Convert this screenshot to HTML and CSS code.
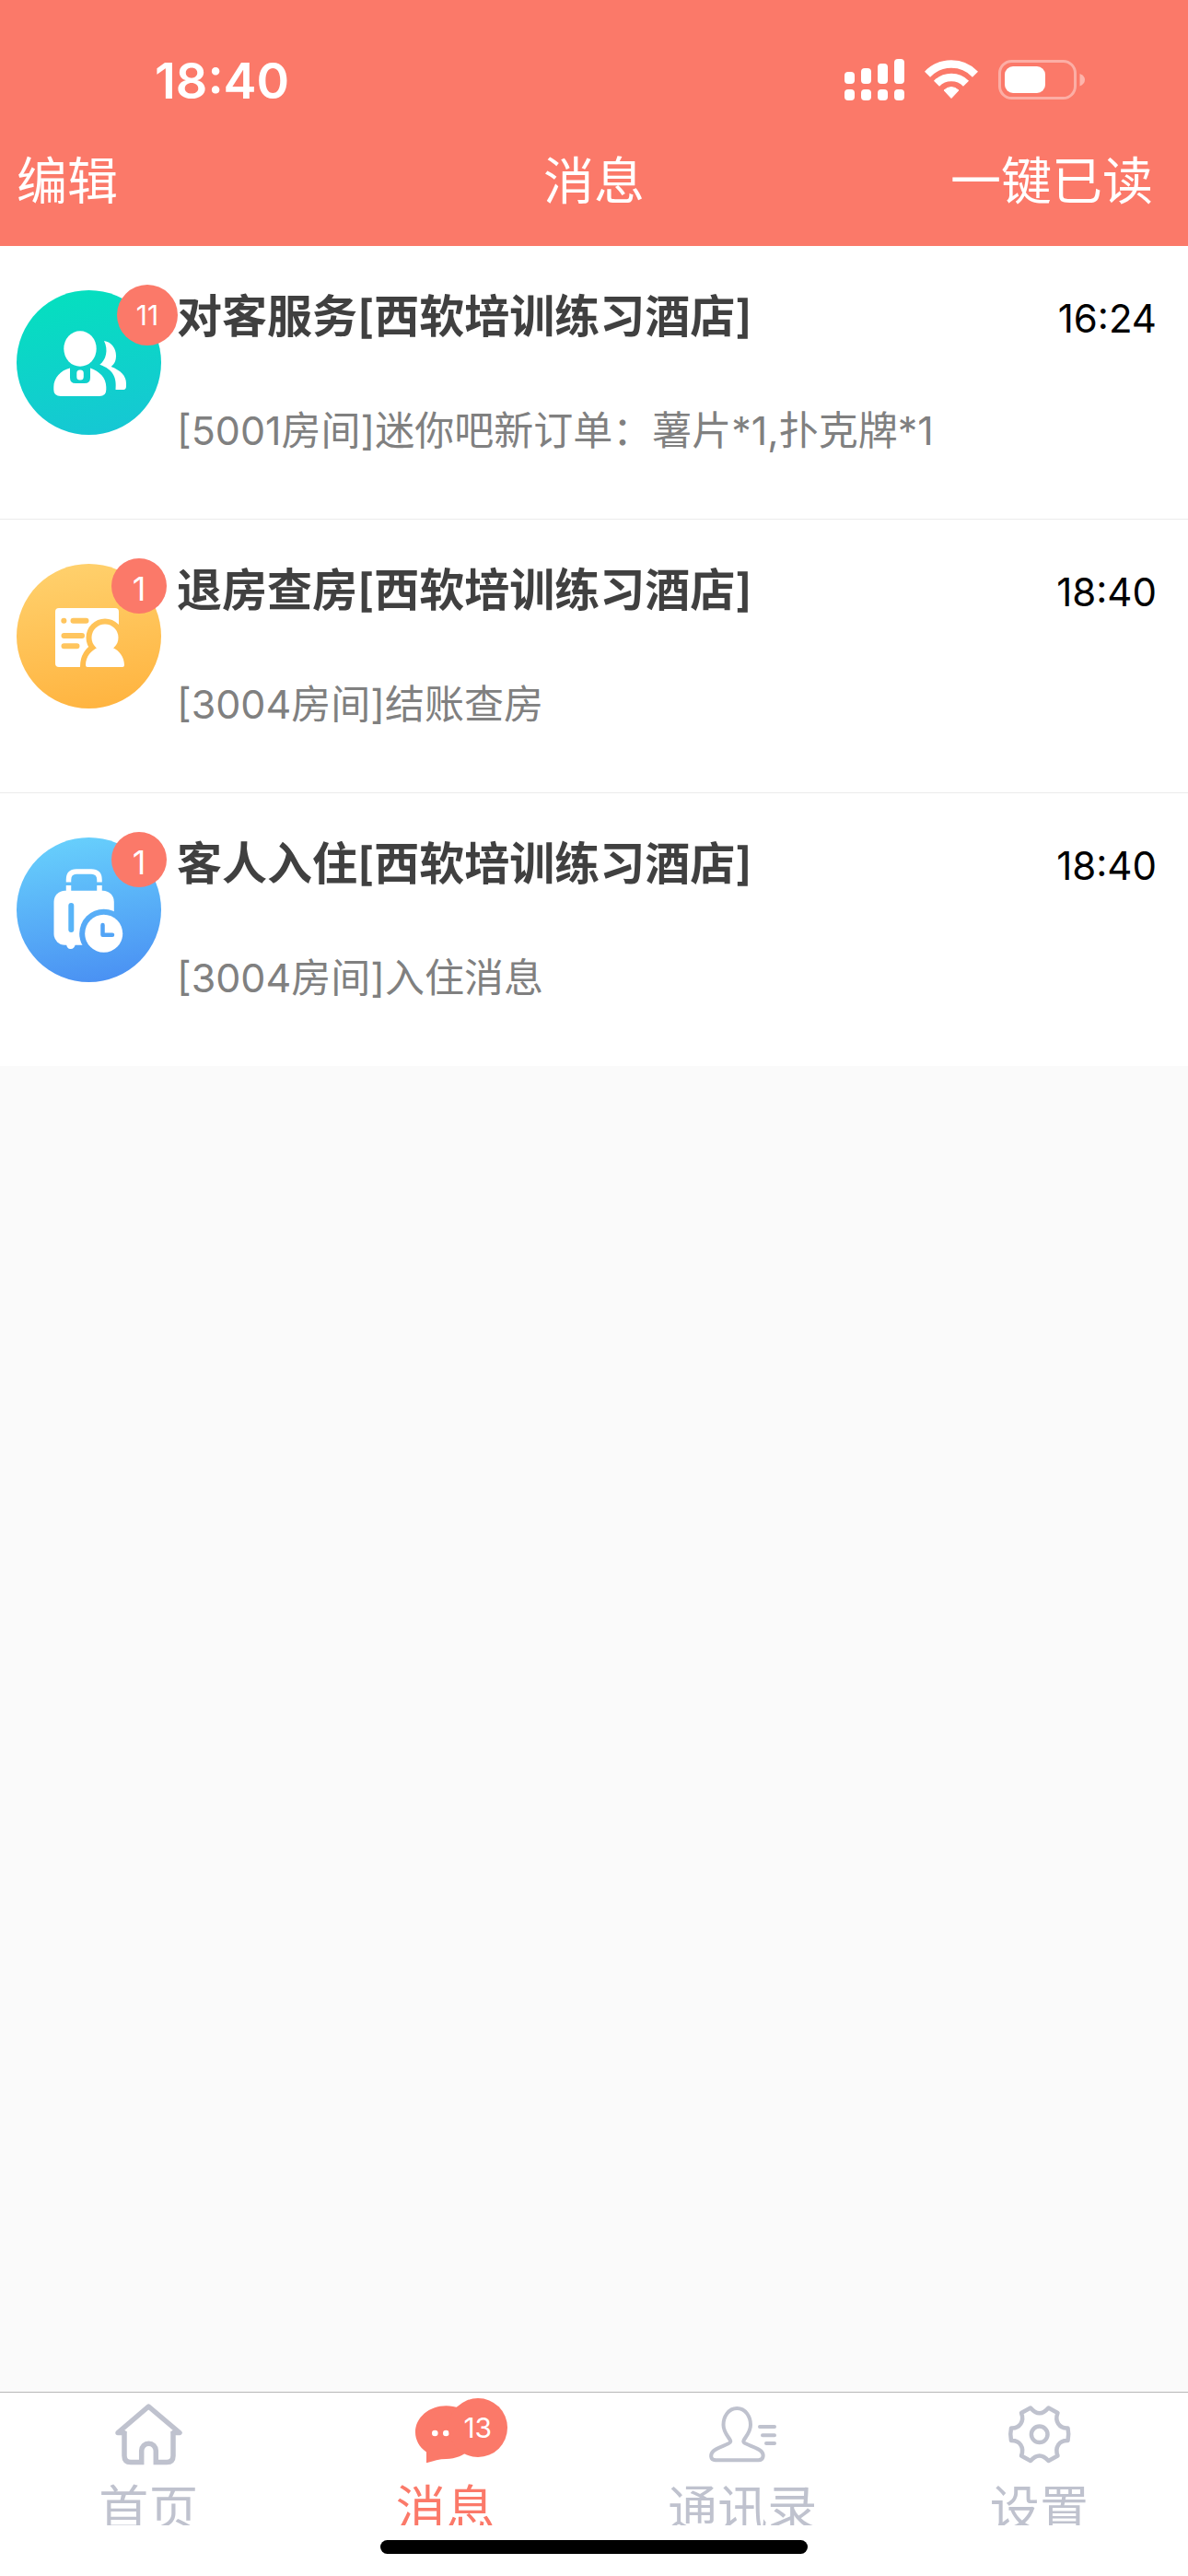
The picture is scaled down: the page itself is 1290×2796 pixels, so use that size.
FILE: index.html
```html
<!DOCTYPE html>
<html lang="zh-CN">
<head>
<meta charset="UTF-8">
<meta name="viewport" content="width=device-width,initial-scale=1">
<title>消息</title>
<link rel="stylesheet" href="styles.css">
</head>
<body>
<header class="header">
  <div class="status">
    <span class="clock">18:40</span>
    <div class="status-icons">
      <svg width="65" height="45" viewBox="0 0 65 45" fill="#fff">
        <rect x="0" y="14" width="11" height="13" rx="4"/><rect x="18" y="10" width="11" height="17" rx="4"/>
        <rect x="36" y="5" width="11" height="22" rx="4"/><rect x="54" y="0" width="11" height="27" rx="4"/>
        <rect x="0" y="33" width="11" height="12" rx="4"/><rect x="18" y="33" width="11" height="12" rx="4"/>
        <rect x="36" y="33" width="11" height="12" rx="4"/><rect x="54" y="33" width="11" height="12" rx="4"/>
      </svg>
      <svg width="58" height="43" viewBox="0 0 58 43" fill="none" stroke="#fff" stroke-width="8.5">
        <path d="M3 15.7A36 36 0 0 1 55 15.7"/>
        <path d="M13 25.7A22.4 22.4 0 0 1 45 25.7"/>
        <path d="M21 33Q29 26 37 33L29 41.5Z" fill="#fff" stroke-width="1" stroke-linejoin="round"/>
      </svg>
      <svg width="94" height="43" viewBox="0 0 94 43">
        <rect x="1.5" y="1.5" width="82" height="40" rx="13" fill="none" stroke="#fff" stroke-width="3" opacity=".4"/>
        <rect x="7" y="7" width="44" height="29" rx="9" fill="#fff"/>
        <path d="M88.5 15Q94 17 94 21.5T88.5 28.5Z" fill="#fff" opacity=".45"/>
      </svg>
    </div>
  </div>
  <div class="nav">
    <button class="nav-btn" type="button">编辑</button>
    <h1>消息</h1>
    <button class="nav-btn nav-right" type="button">一键已读</button>
  </div>
</header>

<main class="content">
  <ul class="messages">
    <li class="message">
      <div class="avatar">
        <svg viewBox="0 0 157 157">
          <defs><linearGradient id="teal" x1=".4" y1="0" x2=".6" y2="1"><stop offset="0" stop-color="#05dfbf"/><stop offset="1" stop-color="#16c7d4"/></linearGradient></defs>
          <circle cx="78.5" cy="78.5" r="78.5" fill="url(#teal)"/>
          <g fill="#fff">
            <ellipse cx="69" cy="63.5" rx="17.7" ry="19.3"/>
            <path d="M58 84.500V95Q58 101 64 101H74Q80 101 80 95V84.500C90 88 97.300 95 97.300 105V108Q97.300 115 90 115H48Q40.300 115 40.300 108V105C40.300 95 48 87 58 84.500Z"/>
            <rect x="65.300" y="86.500" width="7.500" height="11" rx="3.500"/>
            <path d="M95 55C103 56 108 63 108 71C108 77 106 80 102.700 83C113 87 119 93 119 101V104Q119 108 116 108H107.500C109 95 105 86 90.300 80.700C97 76 100 65 95 55Z"/>
          </g>
        </svg>
        <span class="badge badge-wide">11</span>
      </div>
      <div class="message-body">
        <div class="message-top"><h2>对客服务[西软培训练习酒店]</h2><time>16:24</time></div>
        <p>[5001房间]迷你吧新订单：薯片*1,扑克牌*1</p>
      </div>
    </li>
    <li class="message">
      <div class="avatar">
        <svg viewBox="0 0 157 157">
          <defs><linearGradient id="amber" gradientUnits="userSpaceOnUse" x1="65" y1="0" x2="92" y2="157"><stop offset="0" stop-color="#ffd06c"/><stop offset="1" stop-color="#ffb440"/></linearGradient></defs>
          <circle cx="78.5" cy="78.5" r="78.5" fill="url(#amber)"/>
          <rect x="42" y="48" width="69" height="64" rx="4" fill="#fff"/>
          <g stroke="url(#amber)" stroke-width="12" fill="url(#amber)">
            <circle cx="96" cy="80" r="14.5"/>
            <path d="M75 111.500C75 100 82 94 87 91.300H105C111 94 117 101 117 111.500Z"/>
          </g>
          <g fill="#fff">
            <circle cx="96" cy="80" r="14.5"/>
            <path d="M75 110C75 100 82 94 87 91.300L90 88H102L105 91.300C111 94 117 101 117 110Q117 112 115 112H77Q75 112 75 110Z"/>
          </g>
          <path d="M51.300 61.700h.1M61.500 61.700H75.500M51.500 78H71M51.500 89.300H65.500" fill="none" stroke="#ffc55e" stroke-width="6" stroke-linecap="round"/>
        </svg>
        <span class="badge">1</span>
      </div>
      <div class="message-body">
        <div class="message-top"><h2>退房查房[西软培训练习酒店]</h2><time>18:40</time></div>
        <p>[3004房间]结账查房</p>
      </div>
    </li>
    <li class="message">
      <div class="avatar">
        <svg viewBox="0 0 157 157">
          <defs><linearGradient id="blue" gradientUnits="userSpaceOnUse" x1="65" y1="0" x2="92" y2="157"><stop offset="0" stop-color="#67cffc"/><stop offset="1" stop-color="#4a91f3"/></linearGradient></defs>
          <circle cx="78.5" cy="78.5" r="78.5" fill="url(#blue)"/>
          <path d="M56.500 48.500V46Q56.500 37 65 37H81Q90 37 90 46V48.500M56.500 52V60M90 52V60" fill="none" stroke="#fff" stroke-width="5.500"/>
          <rect x="40.500" y="57.700" width="65.300" height="59" rx="12" fill="#fff"/>
          <path d="M54 115H64Q63 121 58.700 121T54 115Z" fill="#fff"/>
          <path d="M59.300 74V100" stroke="#58b4f8" stroke-width="6" stroke-linecap="round"/>
          <circle cx="94.700" cy="104.300" r="26.500" fill="url(#blue)"/>
          <circle cx="94.700" cy="104.300" r="20.500" fill="#fff"/>
          <path d="M93.500 95V105.700H104" fill="none" stroke="#52a4f6" stroke-width="4.500" stroke-linecap="round" stroke-linejoin="round"/>
        </svg>
        <span class="badge">1</span>
      </div>
      <div class="message-body">
        <div class="message-top"><h2>客人入住[西软培训练习酒店]</h2><time>18:40</time></div>
        <p>[3004房间]入住消息</p>
      </div>
    </li>
  </ul>
</main>

<footer class="footer">
  <nav class="tabs">
    <a class="tab" href="#home">
      <span class="tab-icon">
        <svg viewBox="0 0 80 80" fill="none" stroke="currentColor" stroke-width="5.5" stroke-linejoin="round">
          <path d="M13.500 40.500H7L40.300 12L74 40.500H67.500" stroke-linecap="round"/>
          <path d="M14 39V65.500Q14 72.500 21 72.500H32.700V60A7.800 7.800 0 0 1 48.300 60V72.500H60Q67 72.500 67 65.500V39" stroke-linejoin="miter"/>
        </svg>
      </span>
      <span>首页</span>
    </a>
    <a class="tab active" href="#messages">
      <span class="tab-icon">
        <svg viewBox="0 0 80 80">
          <path d="M40.500 11.300C59 11.300 74 24 74 40S59 69 40.500 69C33 69 27 71 19 73.300V61.500C11 56 7 48 7 40C7 24 22 11.300 40.500 11.300Z" fill="currentColor"/>
          <circle cx="28.300" cy="41" r="3.300" fill="#fff"/><circle cx="40.300" cy="41" r="3.300" fill="#fff"/>
        </svg>
        <span class="badge tab-badge">13</span>
      </span>
      <span>消息</span>
    </a>
    <a class="tab" href="#contacts">
      <span class="tab-icon">
        <svg viewBox="0 0 80 80" fill="none" stroke="currentColor" stroke-width="4" stroke-linecap="round" stroke-linejoin="round">
          <path d="M34.300 14C25 14 19.500 23 19.500 32C19.500 41 27.300 47 27.300 50C27.300 53 13 56 8.500 60.500C5.500 63.500 4.500 70 11 70.300H57.500C64 70 63.500 63.500 60.500 60.500C56 56 41.300 53 41.300 50C41.300 47 49 41 49 32C49 23 43.500 14 34.300 14Z"/>
          <path d="M59 34H75M62 43.300H75M66 52H75"/>
        </svg>
      </span>
      <span>通讯录</span>
    </a>
    <a class="tab" href="#settings">
      <span class="tab-icon">
        <svg viewBox="0 0 80 80" fill="none" stroke="currentColor" stroke-width="4.500" stroke-linejoin="round">
          <path d="M30 13.500Q39.700 25 49.500 13.500L59.500 19C56 28 61 36 70.500 35.500Q72 42 70.500 49C61 48.500 56 56.500 59.500 65.500L49.500 71Q39.700 60 30 71L20 65.500C23.500 56.500 18.500 48.500 9 49Q7.500 42 9 35.500C18.500 36 23.500 28 20 19Z"/>
          <circle cx="39.700" cy="42.300" r="8.800"/>
        </svg>
      </span>
      <span>设置</span>
    </a>
  </nav>
  <div class="home-indicator"></div>
</footer>
</body>
</html>
```
FILE: styles.css
```css
*{box-sizing:border-box;}
body{font-family:Inter,"Noto Sans CJK SC",sans-serif;margin:0;min-height:100vh;display:flex;flex-direction:column;background:#fafafa;color:#000;}
h1,h2,p,ul{margin:0;padding:0;}
svg{display:block;}

.header{background:#fb7969;color:#fff;}
.status{display:flex;justify-content:space-between;align-items:center;padding:56px 112px 8px 168px;}
.clock{padding-top:4px;font-size:54px;line-height:56px;font-weight:600;}
.status-icons{display:flex;align-items:center;gap:22px;}
.nav{display:grid;grid-template-columns:1fr auto 1fr;align-items:center;height:143px;padding:0 18px;}
.nav h1,.nav-btn{font-size:55px;line-height:72px;font-weight:400;}
.nav-btn{font-family:inherit;color:inherit;background:none;border:0;padding:0;justify-self:start;}
.nav-right{justify-self:end;margin-right:20px;}

.content{flex:1;}
.messages{list-style:none;background:#fff;}
.message{display:flex;gap:17px;padding:48px 34px 68px 18px;border-bottom:1px solid #ebebeb;}
.message:last-child{border-bottom:0;}
.avatar{position:relative;flex:none;width:157px;height:157px;}
.badge{position:absolute;top:-6px;right:-6px;width:60px;height:60px;border-radius:50%;background:#fb7969;color:#fff;font-size:36px;line-height:66px;text-align:center;}
.badge-wide{right:-18px;width:66px;height:66px;font-size:30px;}
.message-body{flex:1;}
.message-top{display:flex;justify-content:space-between;align-items:center;}
.message h2{font-size:49px;line-height:58px;font-weight:600;color:#404040;}
.message time{padding-top:4px;font-size:42px;line-height:54px;}
.message p{margin-top:66px;font-size:43px;line-height:56px;color:#808080;}

.footer{background:#fff;border-top:1px solid #b8b8b8;padding-bottom:24px;}
.tabs{display:flex;height:144px;overflow:hidden;}
.tab{flex:1;display:flex;flex-direction:column;align-items:center;gap:14px;padding-top:3px;font-size:54px;line-height:60px;color:#bfc2ce;text-decoration:none;}
.tab.active{color:#fb7969;}
.tab-icon{position:relative;flex:none;width:80px;height:80px;}
.tab-badge{top:3px;right:-27px;width:64px;height:64px;font-size:30px;line-height:64px;}
.home-indicator{width:36%;height:15px;margin:16px auto 0;border-radius:8px;background:#000;}
```
